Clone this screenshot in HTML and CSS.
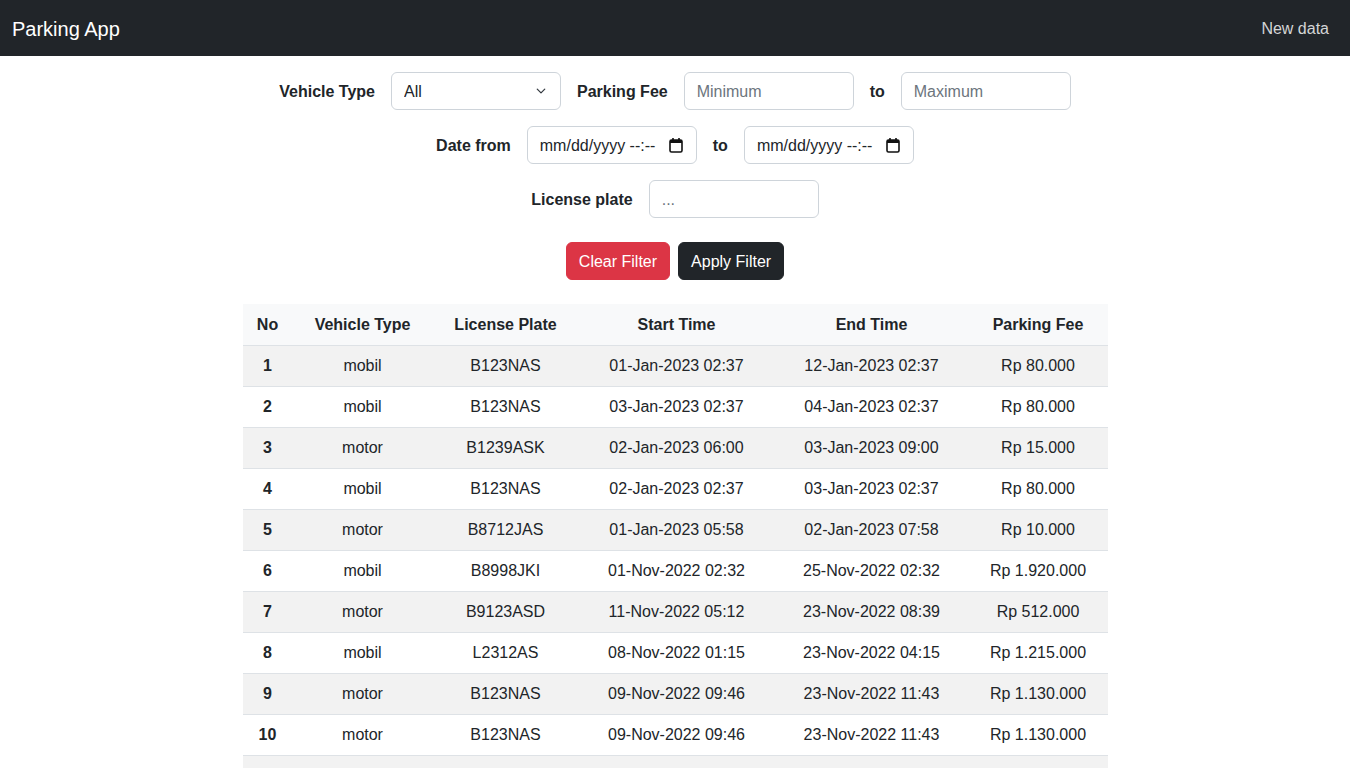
FILE: index.html
```html
<!DOCTYPE html>
<html lang="en">
<head>
<meta charset="utf-8">
<title>Parking App</title>
<link rel="stylesheet" href="styles.css">
</head>
<body>
<nav class="navbar">
  <a class="brand" href="#">Parking App</a>
  <a class="nav-link" href="#">New data</a>
</nav>

<main class="main">
  <form class="filters">
    <div class="filter-row">
      <label class="flabel">Vehicle Type</label>
      <div class="select-wrap">
        <select class="control select">
          <option>All</option>
          <option>mobil</option>
          <option>motor</option>
        </select>
        <svg class="chev" width="14" height="10" viewBox="0 0 16 16"><path d="M2 5l6 6 6-6" fill="none" stroke="#343a40" stroke-width="2" stroke-linecap="round" stroke-linejoin="round"/></svg>
      </div>
      <label class="flabel">Parking Fee</label>
      <input class="control" type="text" placeholder="Minimum">
      <label class="flabel">to</label>
      <input class="control" type="text" placeholder="Maximum">
    </div>
    <div class="filter-row">
      <label class="flabel">Date from</label>
      <div class="control date">
        <span class="date-text">mm/dd/yyyy --:--</span>
        <svg class="cal" width="14" height="16" viewBox="0 0 14 16"><rect x="1" y="3" width="12" height="12" rx="1.5" fill="none" stroke="#111" stroke-width="1.6"/><rect x="1" y="3" width="12" height="3" fill="#111"/><rect x="3.2" y="1" width="1.6" height="3" fill="#111"/><rect x="9.2" y="1" width="1.6" height="3" fill="#111"/></svg>
      </div>
      <label class="flabel">to</label>
      <div class="control date">
        <span class="date-text">mm/dd/yyyy --:--</span>
        <svg class="cal" width="14" height="16" viewBox="0 0 14 16"><rect x="1" y="3" width="12" height="12" rx="1.5" fill="none" stroke="#111" stroke-width="1.6"/><rect x="1" y="3" width="12" height="3" fill="#111"/><rect x="3.2" y="1" width="1.6" height="3" fill="#111"/><rect x="9.2" y="1" width="1.6" height="3" fill="#111"/></svg>
      </div>
    </div>
    <div class="filter-row">
      <label class="flabel">License plate</label>
      <input class="control small-ph" type="text" placeholder="...">
    </div>
    <div class="btn-row">
      <button type="button" class="btn btn-danger">Clear Filter</button>
      <button type="button" class="btn btn-dark">Apply Filter</button>
    </div>
  </form>

  <table class="table">
    <colgroup>
      <col class="c1"><col class="c2"><col class="c3"><col class="c4"><col class="c5"><col class="c6">
    </colgroup>
    <thead>
      <tr><th>No</th><th>Vehicle Type</th><th>License Plate</th><th>Start Time</th><th>End Time</th><th>Parking Fee</th></tr>
    </thead>
    <tbody>
      <tr><th>1</th><td>mobil</td><td>B123NAS</td><td>01-Jan-2023 02:37</td><td>12-Jan-2023 02:37</td><td>Rp 80.000</td></tr>
      <tr><th>2</th><td>mobil</td><td>B123NAS</td><td>03-Jan-2023 02:37</td><td>04-Jan-2023 02:37</td><td>Rp 80.000</td></tr>
      <tr><th>3</th><td>motor</td><td>B1239ASK</td><td>02-Jan-2023 06:00</td><td>03-Jan-2023 09:00</td><td>Rp 15.000</td></tr>
      <tr><th>4</th><td>mobil</td><td>B123NAS</td><td>02-Jan-2023 02:37</td><td>03-Jan-2023 02:37</td><td>Rp 80.000</td></tr>
      <tr><th>5</th><td>motor</td><td>B8712JAS</td><td>01-Jan-2023 05:58</td><td>02-Jan-2023 07:58</td><td>Rp 10.000</td></tr>
      <tr><th>6</th><td>mobil</td><td>B8998JKI</td><td>01-Nov-2022 02:32</td><td>25-Nov-2022 02:32</td><td>Rp 1.920.000</td></tr>
      <tr><th>7</th><td>motor</td><td>B9123ASD</td><td>11-Nov-2022 05:12</td><td>23-Nov-2022 08:39</td><td>Rp 512.000</td></tr>
      <tr><th>8</th><td>mobil</td><td>L2312AS</td><td>08-Nov-2022 01:15</td><td>23-Nov-2022 04:15</td><td>Rp 1.215.000</td></tr>
      <tr><th>9</th><td>motor</td><td>B123NAS</td><td>09-Nov-2022 09:46</td><td>23-Nov-2022 11:43</td><td>Rp 1.130.000</td></tr>
      <tr><th>10</th><td>motor</td><td>B123NAS</td><td>09-Nov-2022 09:46</td><td>23-Nov-2022 11:43</td><td>Rp 1.130.000</td></tr>
      <tr class="spacer-row"><td colspan="6"></td></tr>
    </tbody>
  </table>
</main>
</body>
</html>
```

FILE: styles.css
```css
* { box-sizing: border-box; }

body {
  margin: 0;
  font-family: "Liberation Sans", Arial, sans-serif;
  font-size: 16px;
  line-height: 1.5;
  color: #212529;
  background: #fff;
}

.navbar {
  height: 56px;
  background: #212529;
  display: flex;
  align-items: center;
  justify-content: space-between;
  padding: 8px 12px;
}

.brand {
  color: #fff;
  font-size: 20px;
  line-height: 30px;
  padding-top: 2px;
  text-decoration: none;
}

.nav-link {
  color: rgba(255, 255, 255, 0.82);
  text-decoration: none;
  padding: 9px 9px 7px 0;
  font-size: 16px;
}

.main {
  padding-top: 16px;
}

.filters {
  display: flex;
  flex-direction: column;
  align-items: center;
  gap: 16px;
  margin: 0;
}

.filter-row {
  display: flex;
  align-items: center;
  justify-content: center;
  gap: 16px;
}

.flabel {
  font-weight: 700;
  white-space: nowrap;
  padding-top: 2px;
}

.control {
  width: 170px;
  height: 38px;
  padding: 7px 12px 5px;
  font: inherit;
  color: #212529;
  background: #fff;
  border: 1px solid #ced4da;
  border-radius: 6px;
  outline: none;
}

.control::placeholder {
  color: #6c757d;
  opacity: 1;
}

.select-wrap {
  position: relative;
  display: flex;
}

.select {
  appearance: none;
  -webkit-appearance: none;
  padding-right: 36px;
}

.chev {
  position: absolute;
  right: 13px;
  top: 14px;
  pointer-events: none;
}

.date {
  display: flex;
  align-items: center;
  justify-content: space-between;
  padding: 6px 13px 6px 12px;
}

.date-text {
  white-space: nowrap;
  padding-top: 2px;
}

.btn-row {
  display: flex;
  justify-content: center;
  gap: 8px;
  margin-top: 8px;
}

.btn {
  height: 38px;
  padding: 7px 12px 5px;
  font: inherit;
  color: #fff;
  border: 1px solid transparent;
  border-radius: 6px;
  cursor: pointer;
}

.btn-danger {
  background: #dc3545;
  border-color: #dc3545;
}

.btn-dark {
  background: #212529;
  border-color: #212529;
}

.table {
  width: 865px;
  margin: 24px auto 0;
  border-collapse: collapse;
  table-layout: fixed;
}

.c1 { width: 50px; }
.c2 { width: 140px; }
.c3 { width: 146px; }
.c4 { width: 196px; }
.c5 { width: 194px; }
.c6 { width: 139px; }

.table th,
.table td {
  padding: 8px;
  height: 41px;
  text-align: center;
  border-bottom: 1px solid #dee2e6;
  white-space: nowrap;
}

.table thead th {
  background: #f8f9fa;
  font-weight: 700;
  padding: 9px 8px 7px;
}

.table tbody th {
  font-weight: 700;
}

.table tbody tr:nth-child(odd) th,
.table tbody tr:nth-child(odd) td {
  background: #f2f2f2;
}
```
